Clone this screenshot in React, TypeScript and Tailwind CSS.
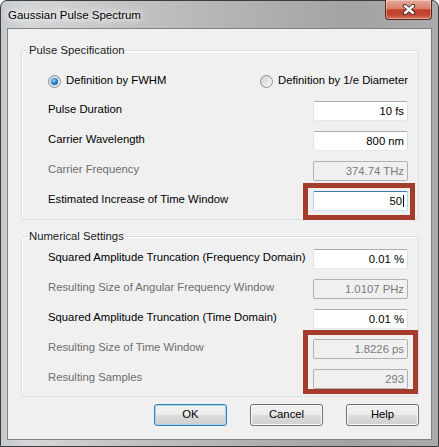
import React from "react";

type BoxKind = "normal" | "disabled" | "focused";

function TextBox({ value, kind = "normal", caret = false }: { value: string; kind?: BoxKind; caret?: boolean }) {
  const base = "w-[95px] h-[20px] flex items-center justify-end pr-[3px] rounded-[2px] border leading-[14px] whitespace-nowrap";
  const styles: Record<BoxKind, string> = {
    normal: "bg-white border-[#e2e3ea] border-t-[#abadb3] border-r-[#dbdfe6] border-b-[#e3e9ef] text-black",
    disabled: "bg-[#f0f0f0] border-[#adb2b5] text-[#7a7a7a]",
    focused: "bg-white border-[#b5cfe7] border-t-[#3d7bad] border-r-[#b7d9ed] border-b-[#c7e2f1] text-black",
  };
  return (
    <div className={`${base} ${styles[kind]}`}>
      <span>{value}</span>
      {caret && <span className="w-px h-[12px] bg-black ml-px" />}
    </div>
  );
}

function Row({ label, value, kind = "normal", disabledLabel = false, caret = false }: { label: string; value: string; kind?: BoxKind; disabledLabel?: boolean; caret?: boolean }) {
  return (
    <div className="h-[30px] flex items-center justify-between pl-[26px] pr-[10px]">
      <span className={`pb-[3px] whitespace-nowrap ${disabledLabel ? "text-[#6d6d6d]" : "text-black"}`}>{label}</span>
      <TextBox value={value} kind={kind} caret={caret} />
    </div>
  );
}

function Radio({ checked, label }: { checked: boolean; label: string }) {
  return (
    <div className="flex items-center gap-[5px] whitespace-nowrap">
      <div className="w-[13px] h-[13px] rounded-full border border-[#8e8f8f] bg-[linear-gradient(135deg,#cfcfcf,#fbfbfb)] flex items-center justify-center">
        {checked ? (
          <div className="w-[7px] h-[7px] rounded-full bg-[radial-gradient(circle_at_40%_35%,#9bd8ff,#2a7cc6_50%,#0b3f79)] shadow-[0_0_0_1px_#c8dcef]" />
        ) : (
          <div className="w-[9px] h-[9px] rounded-full bg-[linear-gradient(135deg,#d4d4d4,#f6f6f6)]" />
        )}
      </div>
      <span className="text-black pb-[2px]">{label}</span>
    </div>
  );
}

function Button({ label, isDefault = false }: { label: string; isDefault?: boolean }) {
  return (
    <div
      className={`w-[73px] h-[22px] rounded-[3px] border flex items-center justify-center text-black bg-[linear-gradient(180deg,#f2f2f2_0%,#ebebeb_50%,#dddddd_50%,#cfcfcf_100%)] ${
        isDefault
          ? "border-[#3c7fb1] shadow-[inset_0_0_0_1px_#9fd6f3]"
          : "border-[#707070] shadow-[inset_0_0_0_1px_#fcfcfc]"
      }`}
    >
      <span className="pb-[1px]">{label}</span>
    </div>
  );
}

function Group({ title, children, className }: { title: string; children: React.ReactNode; className: string }) {
  return (
    <fieldset className={`ml-[13px] w-[398px] border border-[#d5dfe5] rounded-[3px] shadow-[inset_1px_1px_0_#ffffff] ${className}`}>
      <legend className="ml-[6px] px-[1px] leading-[16px] text-[#1a1a1a] whitespace-nowrap">{title}</legend>
      {children}
    </fieldset>
  );
}

export default function App() {
  return (
    <div className="relative w-[439px] h-[447px] [font-family:'Liberation_Sans',Arial,sans-serif] text-[11.3px]">
      <div className="w-full h-full rounded-t-[7px] border border-[#3c3c3c] bg-[linear-gradient(90deg,#c6cacd_0%,#d4d6d8_6%,#c2c2c2_30%,#b2b2b2_55%,#a3a3a3_80%,#ababab_100%)] flex flex-col px-[6px] pb-[6px]">
        {/* Title bar */}
        <div className="h-[27px] flex items-start">
          <span className="ml-[1px] mt-[6px] leading-[16px] text-[11.5px] text-black whitespace-nowrap [text-shadow:0_0_8px_#ffffff,0_0_12px_#ffffff,0_0_4px_#ffffff]">
            Gaussian Pulse Spectrum
          </span>
          <div className="ml-auto -mt-px w-[47px] h-[20px] rounded-b-[4px] border border-t-0 border-[#5a2a22] bg-[linear-gradient(180deg,#e7a898_0%,#d9806c_45%,#c2402a_52%,#c24630_78%,#d9765f_100%)] shadow-[inset_0_0_0_1px_rgba(255,255,255,0.35)] flex items-center justify-center">
            <svg width="14" height="11" viewBox="0 0 14 11">
              <path d="M3 2 L11 9 M11 2 L3 9" stroke="#3d2a26" strokeWidth="4.2" strokeLinecap="round" />
              <path d="M3 2 L11 9 M11 2 L3 9" stroke="#ffffff" strokeWidth="2.4" strokeLinecap="round" />
            </svg>
          </div>
        </div>

        {/* Client area */}
        <div className="w-[425px] h-[412px] border border-[#7f8489] bg-[#f0f0f0] flex flex-col">
          <Group title="Pulse Specification" className="mt-[13px] pt-[8px] pb-[3px]">
            <div className="h-[30px] flex items-center pl-[26px]">
              <div className="w-[212px]">
                <Radio checked label="Definition by FWHM" />
              </div>
              <Radio checked={false} label="Definition by 1/e Diameter" />
            </div>
            <Row label="Pulse Duration" value="10 fs" />
            <Row label="Carrier Wavelength" value="800 nm" />
            <Row label="Carrier Frequency" value="374.74 THz" kind="disabled" disabledLabel />
            <Row label="Estimated Increase of Time Window" value="50" kind="focused" caret />
          </Group>

          <Group title="Numerical Settings" className="mt-[8px] pb-[2px]">
            <Row label="Squared Amplitude Truncation (Frequency Domain)" value="0.01 %" />
            <Row label="Resulting Size of Angular Frequency Window" value="1.0107 PHz" kind="disabled" disabledLabel />
            <Row label="Squared Amplitude Truncation (Time Domain)" value="0.01 %" />
            <Row label="Resulting Size of Time Window" value="1.8226 ps" kind="disabled" disabledLabel />
            <Row label="Resulting Samples" value="293" kind="disabled" disabledLabel />
          </Group>

          <div className="mt-[7px] flex justify-end gap-[23px] pr-[12px]">
            <Button label="OK" isDefault />
            <Button label="Cancel" />
            <Button label="Help" />
          </div>
        </div>
      </div>

      {/* Annotation boxes */}
      <div className="absolute left-[303px] top-[183px] w-[112px] h-[37px] border-[5px] border-[#a53b2b]" />
      <div className="absolute left-[303px] top-[330px] w-[115px] h-[64px] border-[5px] border-[#a53b2b]" />
    </div>
  );
}
